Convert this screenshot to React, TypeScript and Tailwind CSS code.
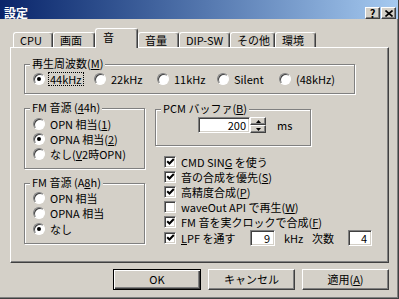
import React from "react";

const raised =
  "bg-[#d4d0c8] border border-t-white border-l-white border-r-[#404040] border-b-[#404040] shadow-[inset_-1px_-1px_0_#808080]";
const sunken =
  "bg-white border border-t-[#808080] border-l-[#808080] border-r-white border-b-white shadow-[inset_1px_1px_0_#404040,inset_-1px_-1px_0_#d4d0c8]";

function Group({ label, className, children }: { label: React.ReactNode; className: string; children?: React.ReactNode }) {
  return (
    <div className={`relative border border-[#808080] shadow-[inset_1px_1px_0_#fff,1px_1px_0_#fff] ${className}`}>
      <span className="absolute left-[5px] top-[-8px] bg-[#d4d0c8] px-[2px] leading-[13px] whitespace-nowrap">{label}</span>
      {children}
    </div>
  );
}

function Radio({ checked }: { checked?: boolean }) {
  return (
    <span className="w-[12px] h-[12px] shrink-0 rounded-full bg-white border border-t-[#808080] border-l-[#808080] border-r-white border-b-white shadow-[inset_1px_1px_0_#404040] flex items-center justify-center">
      {checked && <span className="w-[4px] h-[4px] rounded-full bg-black" />}
    </span>
  );
}

function Check({ checked }: { checked?: boolean }) {
  return (
    <span className={`w-[12px] h-[12px] shrink-0 flex items-center justify-center ${sunken}`}>
      {checked && (
        <svg width="9" height="9" viewBox="0 0 9 9">
          <path d="M1.2 4.2 L3.5 6.5 L7.8 2" stroke="black" strokeWidth="2" fill="none" />
        </svg>
      )}
    </span>
  );
}

const tabs = [
  { label: "CPU", w: "w-[40px]" },
  { label: "画面", w: "w-[42px]" },
  { label: "音", w: "w-[43px]", active: true },
  { label: "音量", w: "w-[41px]" },
  { label: "DIP-SW", w: "w-[51px]" },
  { label: "その他", w: "w-[45px]" },
  { label: "環境", w: "w-[41px]" },
];

const rates = [
  { label: "44kHz", w: "w-[61px]", checked: true },
  { label: "22kHz", w: "w-[63px]" },
  { label: "11kHz", w: "w-[60px]" },
  { label: "Silent", w: "w-[62px]" },
  { label: "(48kHz)", w: "" },
];

function App() {
  return (
    <div className="w-[399px] h-[299px] overflow-hidden bg-[#d4d0c8] text-black text-[11px] leading-[14px] font-['Noto_Sans_CJK_JP',sans-serif] border-r border-b border-[#404040] shadow-[inset_-1px_-1px_0_#808080] flex flex-col">
      {/* title bar */}
      <div className="h-[19px] shrink-0 flex items-start pt-[6px] pr-[2px] bg-linear-to-r from-[#0a246a] to-[#a6caf0]">
        <span className="pl-[4px] text-[12px] leading-[13px] text-white font-bold">設定</span>
        <div className="ml-auto flex gap-[1px] mt-[1px]">
          <span className={`w-[15px] h-[12px] flex items-center justify-center font-bold text-[11px] leading-none ${raised}`}>?</span>
          <span className={`w-[15px] h-[12px] flex items-center justify-center ${raised}`}>
            <svg width="8" height="7" viewBox="0 0 8 7">
              <path d="M0.5 0.5 L7.5 6.5 M7.5 0.5 L0.5 6.5" stroke="black" strokeWidth="1.6" />
            </svg>
          </span>
        </div>
      </div>

      <div className="flex-1 pl-[10px] pt-[9px]">
        {/* tabs */}
        <div className="relative z-10 h-[19px] pl-[3px] flex items-end">
          {tabs.map((t) =>
            t.active ? (
              <div
                key={t.label}
                className={`${t.w} h-[20px] -mb-[1px] pl-[7px] pb-[3px] flex items-center bg-[#d4d0c8] border-t border-l border-r border-t-white border-l-white border-r-[#404040] shadow-[inset_-1px_0_0_#808080] rounded-t-[3px]`}
              >
                {t.label}
              </div>
            ) : (
              <div
                key={t.label}
                className={`${t.w} h-[15px] pl-[6px] flex items-center whitespace-nowrap border-t border-l border-r border-t-white border-l-white border-r-[#404040] shadow-[inset_-1px_0_0_#808080] rounded-t-[3px]`}
              >
                {t.label}
              </div>
            )
          )}
        </div>

        {/* panel */}
        <div className="w-[379px] h-[216px] pl-[13px] pt-[16px] border border-t-white border-l-white border-r-[#404040] border-b-[#404040] shadow-[inset_-1px_-1px_0_#808080]">
          <Group label={<>再生周波数(<u>M</u>)</>} className="w-[331px] h-[30px]">
            <div className="h-full pl-[8px] flex items-center">
              {rates.map((r) => (
                <div key={r.label} className={`${r.w} flex items-center gap-[3px]`}>
                  <Radio checked={r.checked} />
                  <span
                    className={`px-[1px] leading-[12px] border ${r.checked ? "border-dotted border-black" : "border-transparent"}`}
                  >
                    {r.label}
                  </span>
                </div>
              ))}
            </div>
          </Group>

          <div className="mt-[14px] flex">
            <div className="w-[121px] flex flex-col">
              <Group label={<>FM 音源 (<u>4</u>4h)</>} className="h-[61px]">
                <div className="pl-[8px] pt-[7px] flex flex-col">
                  <div className="h-[15px] flex items-center gap-[5px]">
                    <Radio />
                    <span>OPN 相当(<u>1</u>)</span>
                  </div>
                  <div className="h-[15px] flex items-center gap-[5px]">
                    <Radio checked />
                    <span>OPNA 相当(<u>2</u>)</span>
                  </div>
                  <div className="h-[15px] flex items-center gap-[5px]">
                    <Radio />
                    <span>なし(<u>V</u>2時OPN)</span>
                  </div>
                </div>
              </Group>
              <Group label={<>FM 音源 (A<u>8</u>h)</>} className="mt-[14px] h-[61px]">
                <div className="pl-[8px] pt-[6px] flex flex-col">
                  <div className="h-[15px] flex items-center gap-[5px]">
                    <Radio />
                    <span>OPN 相当</span>
                  </div>
                  <div className="h-[16px] flex items-center gap-[5px]">
                    <Radio />
                    <span>OPNA 相当</span>
                  </div>
                  <div className="h-[16px] flex items-center gap-[5px]">
                    <Radio checked />
                    <span>なし</span>
                  </div>
                </div>
              </Group>
            </div>

            <div className="ml-[10px] pt-[1px] flex flex-col">
              <Group label={<>PCM バッファ(<u>B</u>)</>} className="w-[156px] h-[37px]">
                <div className="pl-[42px] pt-[7px] flex items-start">
                  <span className={`w-[52px] h-[16px] pr-[3px] text-right leading-[14px] ${sunken}`}>200</span>
                  <div className="w-[16px] h-[16px] flex flex-col">
                    <span className={`h-[8px] flex items-center justify-center ${raised}`}>
                      <svg width="5" height="3" viewBox="0 0 5 3">
                        <path d="M2.5 0 L5 3 L0 3 Z" fill="black" />
                      </svg>
                    </span>
                    <span className={`h-[8px] flex items-center justify-center ${raised}`}>
                      <svg width="5" height="3" viewBox="0 0 5 3">
                        <path d="M0 0 L5 0 L2.5 3 Z" fill="black" />
                      </svg>
                    </span>
                  </div>
                  <span className="ml-[11px] leading-[16px]">ms</span>
                </div>
              </Group>

              <div className="mt-[8px] pl-[9px] flex flex-col">
                <div className="h-[15px] flex items-center gap-[5px]">
                  <Check checked />
                  <span>CMD SIN<u>G</u> を使う</span>
                </div>
                <div className="h-[15px] flex items-center gap-[5px]">
                  <Check checked />
                  <span>音の合成を優先(<u>S</u>)</span>
                </div>
                <div className="h-[15px] flex items-center gap-[5px]">
                  <Check checked />
                  <span>高精度合成(<u>P</u>)</span>
                </div>
                <div className="h-[15px] flex items-center gap-[5px]">
                  <Check />
                  <span>waveOut API で再生(<u>W</u>)</span>
                </div>
                <div className="h-[15px] flex items-center gap-[5px]">
                  <Check checked />
                  <span>FM 音を実クロックで合成(<u>F</u>)</span>
                </div>
                <div className="h-[17px] flex items-center gap-[5px]">
                  <Check checked />
                  <span className="w-[69px]">
                    <u>L</u>PF を通す
                  </span>
                  <span className={`-ml-[5px] w-[25px] h-[16px] pr-[4px] text-right leading-[14px] ${sunken}`}>9</span>
                  <span className="ml-[4px] w-[28px]">kHz</span>
                  <span className="-ml-[5px] w-[36px]">次数</span>
                  <span className={`-ml-[5px] w-[24px] h-[16px] pr-[4px] text-right leading-[14px] ${sunken}`}>4</span>
                </div>
              </div>
            </div>
          </div>
        </div>

        {/* buttons */}
        <div className="w-[379px] mt-[6px] flex justify-end gap-[7px]">
          <button className="w-[88px] h-[21px] bg-[#d4d0c8] border border-black shadow-[inset_1px_1px_0_#fff,inset_-1px_-1px_0_#404040,inset_-2px_-2px_0_#808080] leading-none">
            OK
          </button>
          <button className={`w-[87px] h-[21px] leading-none ${raised}`}>キャンセル</button>
          <button className={`w-[87px] h-[21px] leading-none ${raised}`}>
            適用(<u>A</u>)
          </button>
        </div>
      </div>
    </div>
  );
}

export default App;
